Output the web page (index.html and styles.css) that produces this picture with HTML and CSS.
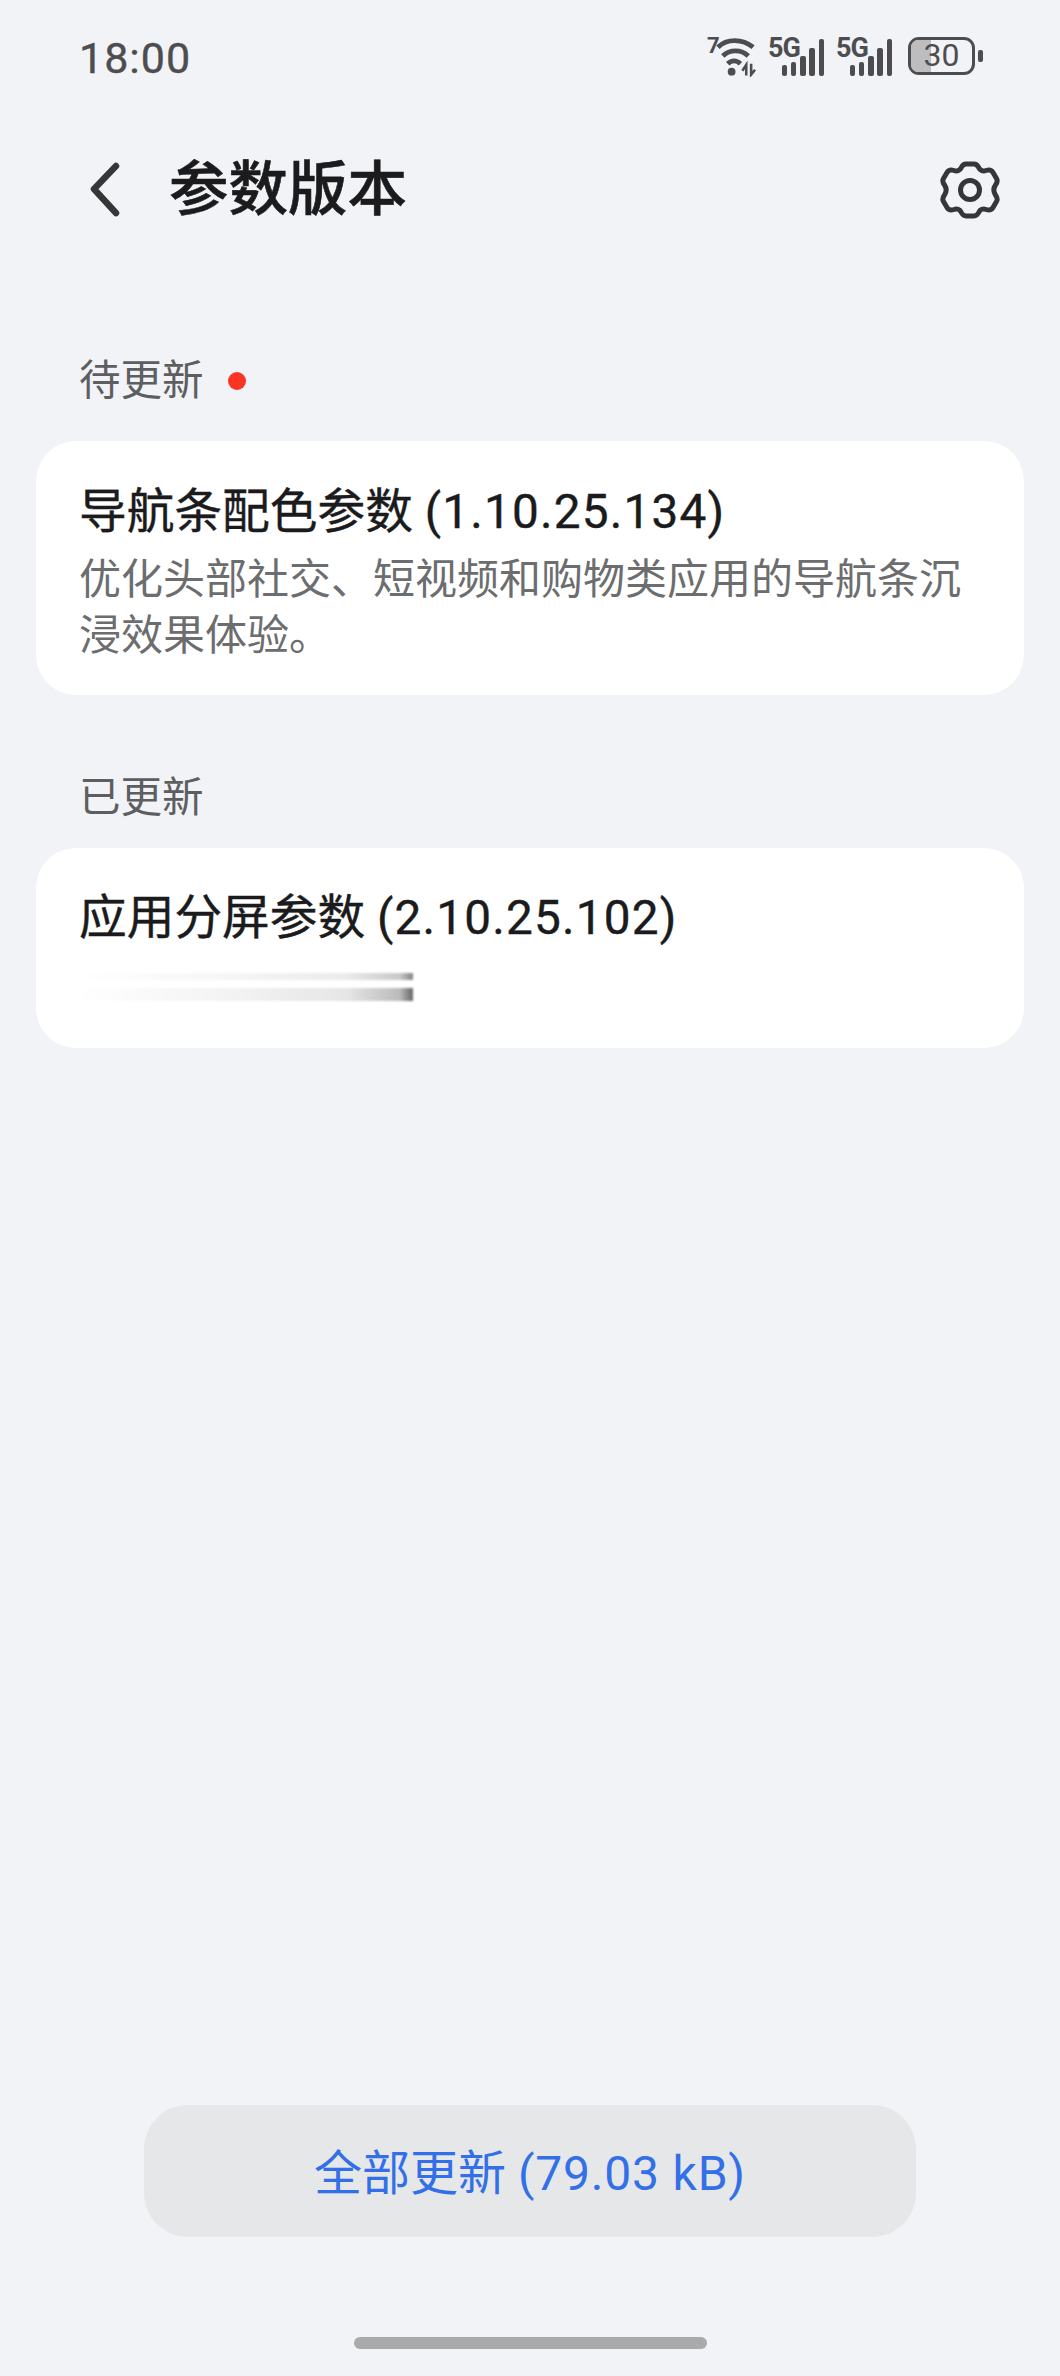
FILE: index.html
```html
<!DOCTYPE html>
<html lang="zh-CN">
<head>
    <meta charset="UTF-8">
    <meta name="viewport" content="width=device-width, initial-scale=1.0">
    <title>参数版本</title>
    <link rel="stylesheet" href="styles.css">
</head>
<body>
    <div class="screen">
        <!-- 状态栏 -->
        <div class="status-bar">
            <div class="time">18:00</div>
            <div class="status-icons">
                <div class="wifi">
                    <span class="wifi-num">7</span>
                    <svg width="43" height="40" viewBox="0 0 43 40" fill="none" stroke="#4d4d4f" stroke-width="5">
                        <path d="M3 10 C12 1 28 1 39 10"/>
                        <path d="M8 19 C15 12 27 12 34 19"/>
                        <path d="M13 27 C17 23 22 23 26 27"/>
                        <circle cx="17" cy="35" r="4" fill="#4d4d4f" stroke="none"/>
                        <path d="M32 39V28L28 34M37 27V38L41 33" stroke-width="2.6"/>
                    </svg>
                </div>
                <div class="signal">
                    <span class="signal-label">5G</span>
                    <div class="bars">
                        <i class="bar b1"></i><i class="bar b2"></i><i class="bar b3"></i><i class="bar b4"></i><i class="bar b5"></i>
                    </div>
                </div>
                <div class="signal">
                    <span class="signal-label">5G</span>
                    <div class="bars">
                        <i class="bar b1"></i><i class="bar b2"></i><i class="bar b3"></i><i class="bar b4"></i><i class="bar b5"></i>
                    </div>
                </div>
                <div class="battery">
                    <div class="battery-body">
                        <div class="battery-level"></div>
                        <span class="battery-text">30</span>
                    </div>
                    <div class="battery-nub"></div>
                </div>
            </div>
        </div>

        <!-- 标题栏 -->
        <div class="nav-bar">
            <svg class="back" width="34" height="56" viewBox="0 0 34 56" fill="none" stroke="#363638" stroke-width="6.5" stroke-linecap="round" stroke-linejoin="round">
                <path d="M28 4 L6 27 L28 51"/>
            </svg>
            <div class="page-title">参数版本</div>
            <svg class="gear" width="62" height="66" viewBox="0 0 62 66" fill="none" stroke="#363638" stroke-width="5" stroke-linejoin="round">
                <path d="M27 7 H35 C38 7 39 9 40 11 C41 13.5 44 14.5 47 13.5 C50 12.5 52.5 13 54 15.5 L57.5 21.5 C59 24 58 26 56.5 28 C54.5 31 54.5 35 56.5 38 C58 40 59 42 57.5 44.5 L54 50.5 C52.5 53 50 53.5 47 52.5 C44 51.5 41 52.5 40 55 C39 57 38 59 35 59 H27 C24 59 23 57 22 55 C21 52.5 18 51.5 15 52.5 C12 53.5 9.5 53 8 50.5 L4.5 44.5 C3 42 4 40 5.5 38 C7.5 35 7.5 31 5.5 28 C4 26 3 24 4.5 21.5 L8 15.5 C9.5 13 12 12.5 15 13.5 C18 14.5 21 13.5 22 11 C23 9 24 7 27 7 Z"/>
                <circle cx="31" cy="33" r="9.5"/>
            </svg>
        </div>

        <div class="section-label first">
            <span>待更新</span>
            <i class="red-dot"></i>
        </div>
        <div class="card card-pending">
            <div class="card-title">导航条配色参数 <span class="ver">(1.10.25.134)</span></div>
            <div class="card-desc">优化头部社交、短视频和购物类应用的导航条沉浸效果体验。</div>
        </div>

        <div class="section-label second">
            <span>已更新</span>
        </div>
        <div class="card card-done">
            <div class="card-title">应用分屏参数 <span class="ver">(2.10.25.102)</span></div>
            <!-- 这一行在截图里是糊掉的 -->
            <div class="smear">
                <div class="smear-top"></div>
                <div class="smear-bottom"></div>
            </div>
        </div>

        <div class="bottom">
            <div class="update-btn"><span>全部更新 <span class="size">(79.03 kB)</span></span></div>
            <div class="home-bar"></div>
        </div>
    </div>
</body>
</html>
```

FILE: styles.css
```css
* {
    margin: 0;
    padding: 0;
    box-sizing: border-box;
}

body {
    font-family: Roboto, "Noto Sans CJK SC", sans-serif;
    background: #f1f3f7;
    color: #1b1b1d;
}

.screen {
    width: 1060px;
    height: 2376px;
    display: flex;
    flex-direction: column;
    overflow: hidden;
}

/* 状态栏 */
.status-bar {
    height: 84px;
    padding: 32px 77px 0 79px;
    display: flex;
    justify-content: space-between;
    align-items: flex-start;
}

.time {
    margin-top: 1px;
    font-size: 43px;
    line-height: 50px;
    color: #4d4d4f;
    letter-spacing: 1px;
    -webkit-text-stroke: 0.4px #4d4d4f;
}

.status-icons {
    display: flex;
    align-items: flex-start;
    height: 40px;
    margin-top: 5px;
}

.wifi {
    width: 50px;
    height: 40px;
    display: flex;
    margin-right: 11px;
}

.wifi-num {
    font-size: 22px;
    line-height: 18px;
    font-weight: 700;
    color: #4d4d4f;
    width: 8px;
    flex: none;
    font-family: "Liberation Sans Narrow", Roboto, sans-serif;
}

.signal {
    width: 56px;
    height: 39px;
    margin-right: 12px;
    display: flex;
    align-items: flex-end;
    position: relative;
}

.signal + .battery {
    margin-left: 4px;
}

.signal-label {
    position: absolute;
    left: 0;
    top: -2px;
    font-family: "Liberation Sans Narrow", Roboto, sans-serif;
    font-size: 27px;
    line-height: 26px;
    font-weight: 700;
    letter-spacing: -1px;
    color: #4d4d4f;
}

.bars {
    margin-left: auto;
    display: flex;
    align-items: flex-end;
    gap: 3.7px;
}

.bar {
    display: block;
    width: 5.5px;
    border-radius: 2px;
    background: #4d4d4f;
}

.b1 { height: 11px; }
.b2 { height: 14px; }
.b3 { height: 20px; }
.b4 { height: 28px; }
.b5 { height: 37px; }

.battery {
    display: flex;
    align-items: center;
    height: 38px;
}

.battery-body {
    width: 67px;
    height: 38px;
    border: 3.5px solid #4d4d4f;
    border-radius: 11px;
    position: relative;
}

.battery-level {
    width: 20px;
    height: 100%;
    border-radius: 7px 0 0 7px;
    background: #bdbdbf;
}

.battery-text {
    position: absolute;
    left: 0;
    right: 0;
    top: 0;
    text-align: center;
    font-size: 32px;
    line-height: 31px;
    color: #4d4d4f;
}

.battery-nub {
    width: 5px;
    height: 12px;
    margin-left: 3px;
    border-radius: 2px;
    background: #4d4d4f;
}

/* 标题栏 */
.nav-bar {
    height: 110px;
    margin-top: 51px;
    padding-left: 88px;
    padding-right: 59px;
    display: flex;
    align-items: center;
}

.page-title {
    font-size: 59.5px;
    font-weight: 500;
    line-height: 70px;
    margin-left: 47px;
    color: #1b1b1d;
    -webkit-text-stroke: 0.6px #1b1b1d;
}

.gear {
    margin-left: auto;
}

/* 分组 */
.section-label {
    display: flex;
    align-items: center;
    padding-left: 79px;
    font-size: 41.5px;
    line-height: 50px;
    color: #5d5e60;
}

.section-label.first {
    margin-top: 111px;
    margin-bottom: 13px;
}

.section-label.second {
    margin-top: 78px;
    margin-bottom: 3px;
}

.red-dot {
    width: 18px;
    height: 18px;
    margin-left: 24px;
    border-radius: 50%;
    background: #fb3426;
}

.card {
    margin: 22px 36px 0;
    background: #fff;
    border-radius: 40px;
    padding: 0 43px;
}

.card-pending {
    height: 254px;
    padding-top: 43px;
}

.card-done {
    height: 200px;
    padding-top: 42px;
}

.card-title {
    font-size: 47.7px;
    line-height: 56px;
    font-weight: 400;
    color: #1b1b1d;
    -webkit-text-stroke: 0.4px #1b1b1d;
}

.ver {
    letter-spacing: 1.2px;
}

.card-desc {
    margin-top: 12px;
    font-size: 42px;
    line-height: 56px;
    color: #6c6d6f;
}

/* 糊掉的一行 */
.smear {
    width: 334px;
    margin-top: 27px;
    filter: blur(1px);
}

.smear-top,
.smear-bottom {
    background: linear-gradient(90deg, #ffffff 0%, #f5f5f5 40%, #e6e6e6 80%, #bbbbbb 96%, #666666 100%);
}

.smear-top {
    height: 7px;
    opacity: 0.8;
}

.smear-bottom {
    height: 13px;
    margin-top: 8px;
}

/* 底部 */
.bottom {
    margin-top: auto;
    padding-bottom: 27px;
    display: flex;
    flex-direction: column;
    align-items: center;
}

.update-btn {
    width: 772px;
    height: 132px;
    padding-bottom: 5px;
    border-radius: 44px;
    background: #e6e7e9;
    color: #3370e8;
    font-size: 48px;
    display: flex;
    align-items: center;
    justify-content: center;
}

.size {
    letter-spacing: 0.8px;
}

.home-bar {
    width: 353px;
    height: 12px;
    margin-top: 100px;
    border-radius: 6px;
    background: #a9aaaa;
}
```
